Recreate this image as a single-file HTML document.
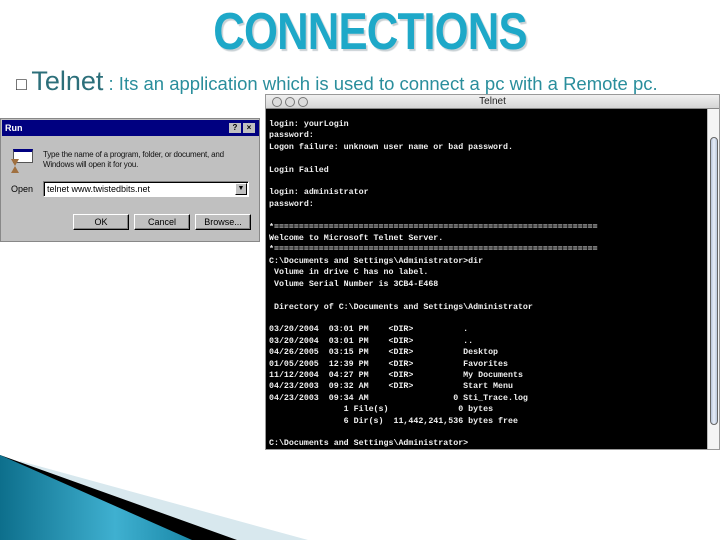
<!DOCTYPE html>
<html><head><meta charset="utf-8"><style>
*{margin:0;padding:0;box-sizing:border-box}
body{width:720px;height:540px;background:#fff;position:relative;overflow:hidden;font-family:"Liberation Sans",sans-serif}
.abs{position:absolute}
#title{left:0;width:740px;top:2px;text-align:center;font-size:52px;font-weight:bold;color:#1ea8c8;text-shadow:2px 2px 1px #c8d0d4;transform:scaleX(0.84);transform-origin:370px 0;letter-spacing:-1px;white-space:nowrap}
#line{left:16px;top:66px;white-space:nowrap;color:#2a8e9c}
#term{left:265px;top:94px;width:455px;height:356px;background:#000;border:1px solid #999}
#tbar{left:0;top:0;width:453px;height:14px;background:linear-gradient(#f0f0f0,#d4d4d4);border-bottom:1px solid #888;font-size:10px;text-align:center;line-height:14px;color:#222}
.dot{position:absolute;top:2px;width:10px;height:10px;border-radius:50%;border:1px solid #777;background:#ddd}
#sb{left:441px;top:14px;width:12px;height:340px;background:#f4f4f4;border-left:1px solid #bbb}
#thumb{left:2px;top:28px;width:8px;height:288px;border-radius:4px;border:1px solid #666;background:linear-gradient(90deg,#b9c6da,#e8eef8,#b9c6da)}
pre{position:absolute;left:3px;top:24px;font-family:"Liberation Mono",monospace;font-size:8.3px;line-height:11.4px;color:#f0f0f0;font-weight:bold}
#run{left:0;top:118px;width:260px;height:124px;background:#c0c0c0;border:1px solid #888;font-size:9px;color:#000}
#rbar{left:1px;top:1px;width:257px;height:16px;background:#000080;color:#fff;font-weight:bold;font-size:9px;line-height:16px;padding-left:3px}
.btn{position:absolute;height:16px;background:#c0c0c0;border:1px solid;border-color:#fff #000 #000 #fff;box-shadow:inset -1px -1px #808080;text-align:center;line-height:14px;font-size:9px}
</style></head><body>
<div id="title" class="abs">CONNECTIONS</div>
<div id="line" class="abs"><span style="font-size:18px;color:#333">□</span> <span style="font-size:27px;color:#2c6f7a">Telnet</span><span style="font-size:18.5px"> : Its an application which is used to connect a pc with a Remote pc.</span></div>

<div id="term" class="abs">
 <div id="tbar" class="abs">Telnet
  <span class="dot" style="left:6px"></span><span class="dot" style="left:19px"></span><span class="dot" style="left:32px"></span></div>
 <pre>login: yourLogin
password:
Logon failure: unknown user name or bad password.

Login Failed

login: administrator
password:

*=================================================================
Welcome to Microsoft Telnet Server.
*=================================================================
C:\Documents and Settings\Administrator>dir
 Volume in drive C has no label.
 Volume Serial Number is 3CB4-E468

 Directory of C:\Documents and Settings\Administrator

03/20/2004  03:01 PM    &lt;DIR&gt;          .
03/20/2004  03:01 PM    &lt;DIR&gt;          ..
04/26/2005  03:15 PM    &lt;DIR&gt;          Desktop
01/05/2005  12:39 PM    &lt;DIR&gt;          Favorites
11/12/2004  04:27 PM    &lt;DIR&gt;          My Documents
04/23/2003  09:32 AM    &lt;DIR&gt;          Start Menu
04/23/2003  09:34 AM                 0 Sti_Trace.log
               1 File(s)              0 bytes
               6 Dir(s)  11,442,241,536 bytes free

C:\Documents and Settings\Administrator></pre>
 <div id="sb" class="abs"><div id="thumb" class="abs"></div></div>
</div>

<div id="run" class="abs">
 <div id="rbar" class="abs">Run
  <span style="position:absolute;right:18px;top:3px;width:12px;height:10px;background:#c0c0c0;color:#000;font-size:8px;line-height:10px;text-align:center">?</span>
  <span style="position:absolute;right:4px;top:3px;width:12px;height:10px;background:#c0c0c0;color:#000;font-size:8px;line-height:10px;text-align:center">×</span></div>
 <div class="abs" style="left:12px;top:30px;width:20px;height:14px;background:#fff;border:1px solid #555;border-top:3px solid #000080"></div>
 <div class="abs" style="left:10px;top:40px;width:8px;height:14px;background:#a07040;clip-path:polygon(0 0,100% 0,50% 50%,100% 100%,0 100%,50% 50%)"></div>
 <div class="abs" style="left:42px;top:31px;line-height:10px;color:#111;font-size:8px;letter-spacing:-0.2px;white-space:nowrap">Type the name of a program, folder, or document, and<br>Windows will open it for you.</div>
 <div class="abs" style="left:10px;top:65px">Open</div>
 <div class="abs" style="left:42px;top:62px;width:206px;height:16px;background:#fff;border:1px solid;border-color:#808080 #fff #fff #808080;box-shadow:inset 1px 1px #000;padding-left:3px;line-height:14px">telnet www.twistedbits.net</div>
 <div class="abs" style="left:234px;top:64px;width:12px;height:12px;background:#c0c0c0;border:1px solid;border-color:#fff #000 #000 #fff;font-size:7px;text-align:center;line-height:10px">▼</div>
 <div class="btn" style="left:72px;top:95px;width:56px">OK</div>
 <div class="btn" style="left:133px;top:95px;width:56px">Cancel</div>
 <div class="btn" style="left:194px;top:95px;width:56px">Browse...</div>
</div>

<svg class="abs" style="left:0;top:440px" width="720" height="100">
 <polygon points="20,21 308,100 0,100" fill="#d8e8ee"/>
 <polygon points="0,15 237,100 0,100" fill="#000"/>
 <defs><linearGradient id="g" x1="0" y1="0" x2="1" y2="0"><stop offset="0" stop-color="#0d6f8c"/><stop offset="0.6" stop-color="#3fb0d0"/><stop offset="1" stop-color="#1a88a8"/></linearGradient></defs>
 <polygon points="0,15 0,100 192,100" fill="url(#g)"/>
</svg>
</body></html>
